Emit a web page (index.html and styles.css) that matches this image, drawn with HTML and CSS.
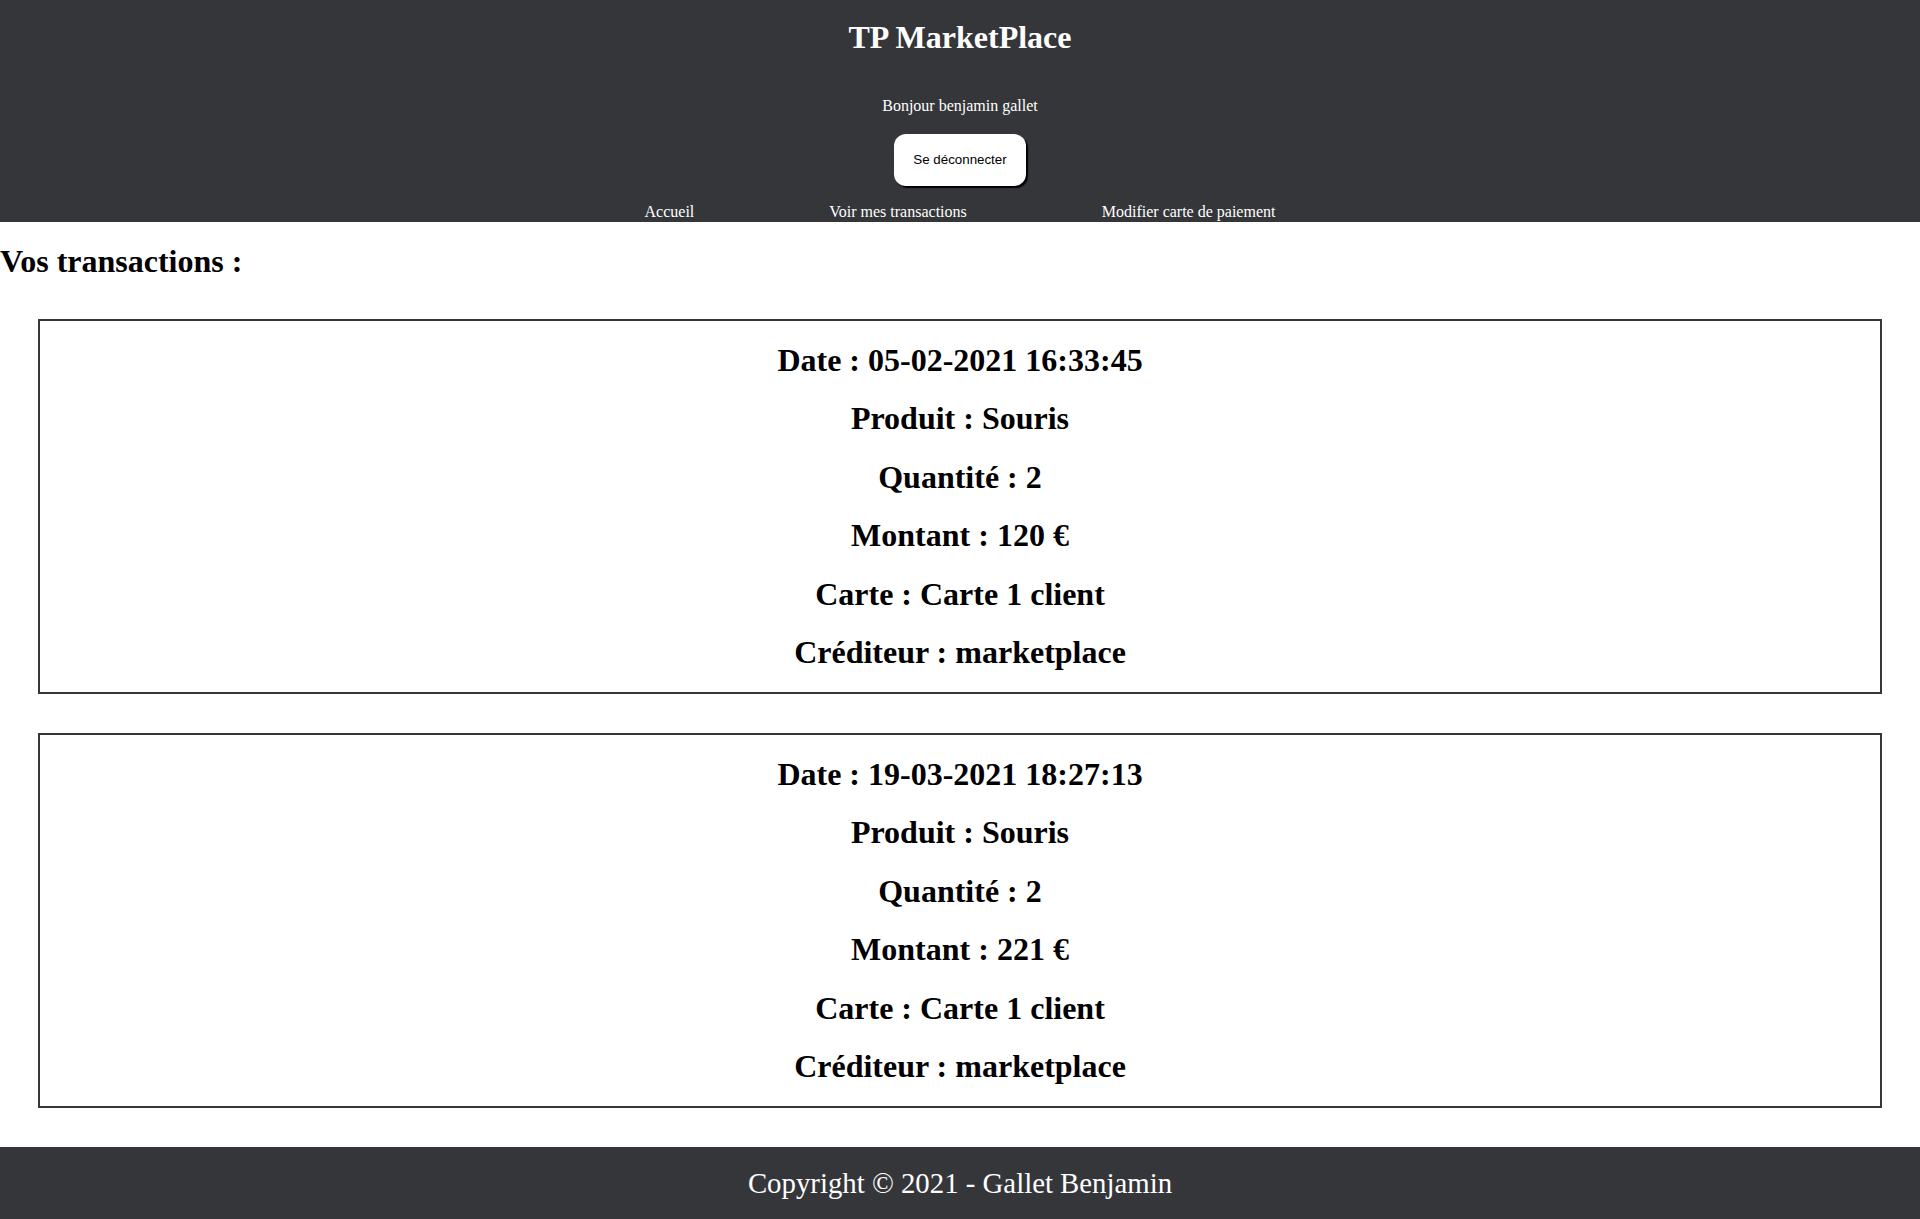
FILE: index.html
```html
<!DOCTYPE html>
<html lang="fr">
<head>
<meta charset="utf-8">
<title>TP MarketPlace</title>
<link rel="stylesheet" href="styles.css">
</head>
<body>
<header class="site-header">
  <h1 class="site-title">TP MarketPlace</h1>
  <p class="greeting">Bonjour benjamin gallet</p>
  <div class="logout-wrap">
    <button class="logout-btn" type="button">Se déconnecter</button>
  </div>
  <nav class="main-nav">
    <a class="nav-link" href="#">Accueil</a>
    <a class="nav-link" href="#">Voir mes transactions</a>
    <a class="nav-link" href="#">Modifier carte de paiement</a>
  </nav>
</header>
<main class="content">
  <h1 class="page-title">Vos transactions :</h1>
  <section class="transaction">
    <h1 class="tx-line">Date : 05-02-2021 16:33:45</h1>
    <h1 class="tx-line">Produit : Souris</h1>
    <h1 class="tx-line">Quantité : 2</h1>
    <h1 class="tx-line">Montant : 120 €</h1>
    <h1 class="tx-line">Carte : Carte 1 client</h1>
    <h1 class="tx-line">Créditeur : marketplace</h1>
  </section>
  <section class="transaction">
    <h1 class="tx-line">Date : 19-03-2021 18:27:13</h1>
    <h1 class="tx-line">Produit : Souris</h1>
    <h1 class="tx-line">Quantité : 2</h1>
    <h1 class="tx-line">Montant : 221 €</h1>
    <h1 class="tx-line">Carte : Carte 1 client</h1>
    <h1 class="tx-line">Créditeur : marketplace</h1>
  </section>
</main>
<footer class="site-footer">
  <p class="copyright">Copyright © 2021 - Gallet Benjamin</p>
</footer>
</body>
</html>
```
FILE: styles.css
```css
html, body {
  margin: 0;
  padding: 0;
}
body {
  font-family: "Liberation Serif", "Times New Roman", serif;
  color: #000;
  background: #fff;
}
.site-header {
  background: #35363a;
  color: #fff;
  text-align: center;
  display: flow-root;
  height: 222px;
  overflow: hidden;
}
.site-title {
  font-size: 32px;
  line-height: 36.8px;
  font-weight: bold;
  margin: 19px 0 0;
}
.greeting {
  font-size: 16px;
  line-height: 18.4px;
  margin: 41px 0 0;
}
.logout-wrap {
  margin-top: 18.5px;
  display: flex;
  justify-content: center;
}
.logout-btn {
  font-family: "Liberation Sans", Arial, sans-serif;
  font-size: 13.33px;
  line-height: 15px;
  color: #000;
  background: #fff;
  border: none;
  border-radius: 12px;
  padding: 18.5px 19px;
  box-shadow: 2px 2px 1px #000;
  cursor: pointer;
}
.main-nav {
  margin-top: 17px;
  display: flex;
  justify-content: center;
  gap: 135px;
  font-size: 16px;
  line-height: 18.4px;
}
.nav-link {
  color: #fff;
  text-decoration: none;
}
.content {
  display: flow-root;
}
.page-title {
  font-size: 32px;
  line-height: 36.8px;
  font-weight: bold;
  margin: 21.4px 0 0;
}
.transaction {
  border: 2px solid #35363a;
  margin: 38.5px 38px;
  text-align: center;
}
.tx-line {
  font-size: 32px;
  line-height: 36.9px;
  font-weight: bold;
  margin: 21.44px 0;
}
.site-footer {
  background: #35363a;
  color: #fff;
  text-align: center;
  padding: 20px 0 19px;
}
.copyright {
  font-size: 28.8px;
  line-height: 33px;
  margin: 0;
}
```
